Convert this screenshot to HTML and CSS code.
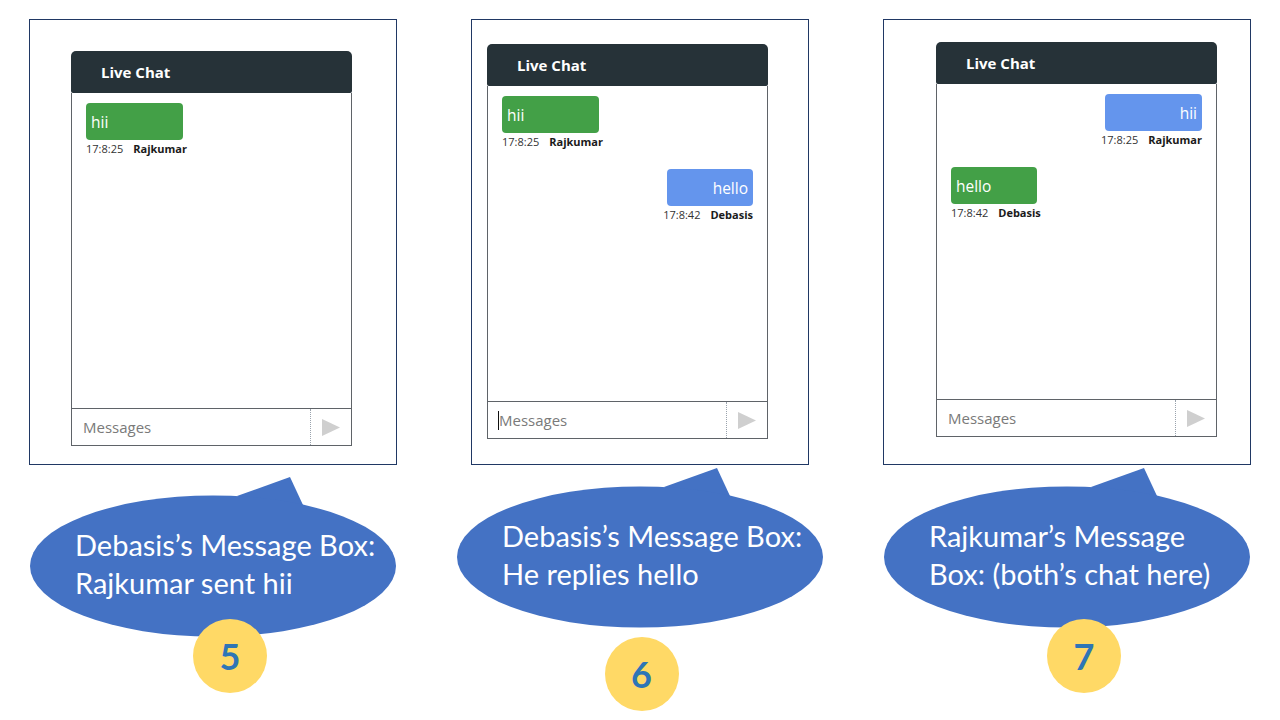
FILE: index.html
```html
<!DOCTYPE html>
<html lang="en">
<head>
<meta charset="utf-8">
<title>Live Chat walkthrough</title>
<link rel="stylesheet" href="styles.css">
</head>
<body>
<main class="slide">
  <section class="col col-1">
    <div class="frame frame-1">
      <div class="chat">
        <div class="chat-head">Live Chat</div>
        <div class="chat-body">
          <div class="msg msg-left">
            <div class="bubble bubble-green w-hii">hii</div>
            <div class="meta"><span class="time">17:8:25</span><span class="name">Rajkumar</span></div>
          </div>
        </div>
        <div class="chat-input">
          <div class="field">Messages</div>
          <div class="send"><svg width="18" height="17" viewBox="0 0 18 17"><polygon points="0,0 18,8.5 0,17" fill="#cfcfcf"/></svg></div>
        </div>
      </div>
    </div>
    <div class="callout callout-low">
      <svg class="callout-shape" width="366" height="160" viewBox="0 0 366 160"><polygon points="207,19 260,0 273,28 240,45" fill="#4472c4"/><ellipse cx="183" cy="89" rx="183" ry="70.5" fill="#4472c4"/></svg>
      <p class="callout-text">Debasis’s Message Box:<br>Rajkumar sent hii</p>
    </div>
    <div class="badge badge-overlap-a">5</div>
  </section>

  <section class="col col-2">
    <div class="frame frame-2">
      <div class="chat">
        <div class="chat-head">Live Chat</div>
        <div class="chat-body">
          <div class="msg msg-left">
            <div class="bubble bubble-green w-hii">hii</div>
            <div class="meta"><span class="time">17:8:25</span><span class="name">Rajkumar</span></div>
          </div>
          <div class="msg msg-right">
            <div class="bubble bubble-blue w-hello">hello</div>
            <div class="meta"><span class="time">17:8:42</span><span class="name">Debasis</span></div>
          </div>
        </div>
        <div class="chat-input">
          <div class="field"><span class="caret"></span>Messages</div>
          <div class="send"><svg width="18" height="17" viewBox="0 0 18 17"><polygon points="0,0 18,8.5 0,17" fill="#cfcfcf"/></svg></div>
        </div>
      </div>
    </div>
    <div class="callout callout-high">
      <svg class="callout-shape" width="366" height="160" viewBox="0 0 366 160"><polygon points="207,19 260,0 273,28 240,45" fill="#4472c4"/><ellipse cx="183" cy="89" rx="183" ry="70.5" fill="#4472c4"/></svg>
      <p class="callout-text">Debasis’s Message Box:<br>He replies hello</p>
    </div>
    <div class="badge badge-below">6</div>
  </section>

  <section class="col col-3">
    <div class="frame frame-3">
      <div class="chat">
        <div class="chat-head">Live Chat</div>
        <div class="chat-body">
          <div class="msg msg-right">
            <div class="bubble bubble-blue w-hii">hii</div>
            <div class="meta"><span class="time">17:8:25</span><span class="name">Rajkumar</span></div>
          </div>
          <div class="msg msg-left">
            <div class="bubble bubble-green w-hello">hello</div>
            <div class="meta"><span class="time">17:8:42</span><span class="name">Debasis</span></div>
          </div>
        </div>
        <div class="chat-input">
          <div class="field">Messages</div>
          <div class="send"><svg width="18" height="17" viewBox="0 0 18 17"><polygon points="0,0 18,8.5 0,17" fill="#cfcfcf"/></svg></div>
        </div>
      </div>
    </div>
    <div class="callout callout-high">
      <svg class="callout-shape" width="366" height="160" viewBox="0 0 366 160"><polygon points="207,19 260,0 273,28 240,45" fill="#4472c4"/><ellipse cx="183" cy="89" rx="183" ry="70.5" fill="#4472c4"/></svg>
      <p class="callout-text">Rajkumar’s Message<br>Box: (both’s chat here)</p>
    </div>
    <div class="badge badge-overlap-b">7</div>
  </section>
</main>
</body>
</html>
```

FILE: styles.css
```css
* { box-sizing: border-box; }

html, body {
  margin: 0;
  padding: 0;
  background: #ffffff;
}

body {
  width: 1280px;
  height: 720px;
  overflow: hidden;
  font-family: "Open Sans", "Noto Sans", "DejaVu Sans", sans-serif;
}

.slide {
  display: flex;
  align-items: flex-start;
  gap: 74px;
  padding: 19px 0 0 29px;
}

.col {
  display: flex;
  flex-direction: column;
  align-items: center;
}

.col-1, .col-3 { width: 368px; }
.col-2 { width: 338px; }

/* framed screenshot */
.frame {
  width: 100%;
  height: 446px;
  border: 1px solid #203864;
  background: #fff;
}
.frame-1 { padding: 31px 0 0 41px; }
.frame-2 { padding: 24px 0 0 15px; }
.frame-3 { padding: 22px 0 0 52px; }

/* chat widget */
.chat {
  width: 281px;
  display: flex;
  flex-direction: column;
}

.chat-head {
  height: 42px;
  background: #263238;
  border-radius: 5px 5px 2px 2px;
  color: #ffffff;
  font-weight: 700;
  font-size: 15px;
  line-height: 42px;
  padding-left: 30px;
}

.chat-body {
  height: 315px;
  border-left: 1px solid #5f6368;
  border-right: 1px solid #5f6368;
  padding: 10px 14px 0 14px;
  display: flex;
  flex-direction: column;
}

.msg {
  display: flex;
  flex-direction: column;
  margin-bottom: 20px;
}
.msg-left { align-items: flex-start; }
.msg-right { align-items: flex-end; }

.bubble {
  height: 37px;
  border-radius: 4px;
  color: #ffffff;
  font-size: 15.5px;
  display: flex;
  align-items: center;
  padding: 0 5px;
}
.bubble-green { background: #43a047; }
.bubble-blue { background: #6495ed; justify-content: flex-end; }
.w-hii { width: 97px; }
.w-hello { width: 86px; }

.meta {
  display: flex;
  gap: 10px;
  font-size: 11px;
  line-height: 15px;
  margin-top: 1px;
}
.time { color: #333333; }
.name { color: #1a1a1a; font-weight: 700; }

.chat-input {
  height: 38px;
  border: 1px solid #5f6368;
  display: flex;
}

.field {
  flex: 1;
  display: flex;
  align-items: center;
  padding-left: 11px;
  color: #7a7a7a;
  font-size: 15px;
}

.caret {
  width: 1px;
  height: 19px;
  background: #111;
  margin-left: -1px;
}

.send {
  width: 41px;
  border-left: 1px dotted #9aa3ad;
  display: flex;
  align-items: center;
  justify-content: center;
}
.send svg { display: block; }

/* callouts */
.callout {
  position: relative;
  width: 366px;
  height: 160px;
  flex: none;
}
.callout-low { margin-top: 12px; }
.callout-high { margin-top: 3px; }

.callout-shape {
  position: absolute;
  left: 0;
  top: 0;
  display: block;
}

.callout-text {
  position: relative;
  margin: 0;
  padding: 49px 0 0 45px;
  color: #ffffff;
  font-family: "Lato", "Open Sans", sans-serif;
  font-size: 29px;
  line-height: 38px;
  white-space: nowrap;
}

.badge {
  position: relative;
  width: 74px;
  height: 74px;
  border-radius: 50%;
  background: #ffd966;
  color: #2e75b6;
  font-family: "Lato", "Open Sans", sans-serif;
  font-weight: 700;
  font-size: 36px;
  display: flex;
  align-items: center;
  justify-content: center;
  flex: none;
}
.badge-overlap-a { margin-top: -18px; margin-left: 34px; }
.badge-below { margin-top: 9px; margin-left: 3px; }
.badge-overlap-b { margin-top: -9px; margin-left: 34px; }
```
